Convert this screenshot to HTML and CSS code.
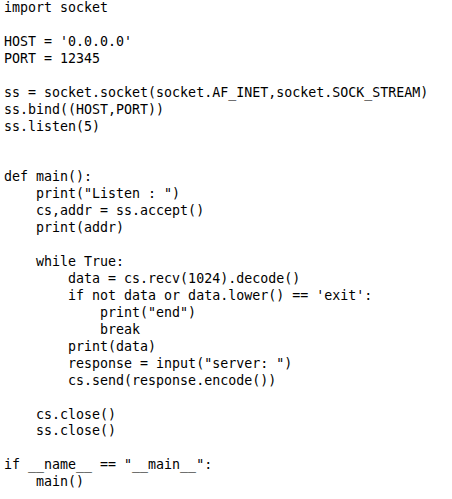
FILE: index.html
```html
<!DOCTYPE html>
<html>
<head>
<meta charset="utf-8">
<link rel="stylesheet" href="styles.css">
</head>
<body>
<pre class="code">import socket

HOST = '0.0.0.0'
PORT = 12345

ss = socket.socket(socket.AF_INET,socket.SOCK_STREAM)
ss.bind((HOST,PORT))
ss.listen(5)


def main():
    print("Listen : ")
    cs,addr = ss.accept()
    print(addr)

    while True:
        data = cs.recv(1024).decode()
        if not data or data.lower() == 'exit':
            print("end")
            break
        print(data)
        response = input("server: ")
        cs.send(response.encode())

    cs.close()
    ss.close()

if __name__ == "__main__":
    main()</pre>
</body>
</html>
```

FILE: styles.css
```css
html, body {
  margin: 0;
  padding: 0;
  background: #ffffff;
}
.code {
  margin: 0;
  padding: 0 0 0 4px;
  font-family: "DejaVu Sans Mono", "Liberation Mono", monospace;
  font-size: 13.3px;
  line-height: 16.93px;
  color: #000000;
  white-space: pre;
}
```
